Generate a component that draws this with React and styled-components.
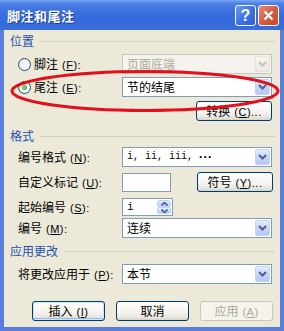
import React from "react";
import styled, { createGlobalStyle } from "styled-components";

const GlobalStyle = createGlobalStyle`
  html, body {
    margin: 0;
    padding: 0;
    background: #ffffff;
  }
  body {
    font-family: "Noto Sans CJK SC", "Noto Sans", sans-serif;
    font-size: 12px;
    color: #000;
  }
`;

const Chevron = ({ disabled }) => (
  <svg width="9" height="6" viewBox="0 0 9 6">
    <path
      d="M1 1 L4.5 4.5 L8 1"
      fill="none"
      stroke={disabled ? "#c4c3bb" : "#4d6185"}
      strokeWidth="2"
    />
  </svg>
);

const Combo = ({ children, disabled }) => (
  <ComboBox $disabled={disabled}>
    <ComboText $disabled={disabled}>{children}</ComboText>
    <DropBtn $disabled={disabled}>
      <Chevron disabled={disabled} />
    </DropBtn>
  </ComboBox>
);

// "(X)" with the access key underlined, plus what follows it (":" or "...")
const Key = ({ k, tail = "" }) => (
  <Mnemonic>
    (<u>{k}</u>){tail}
  </Mnemonic>
);

const App = () => (
  <React.Fragment>
    <GlobalStyle />
    <Window>
      <TitleBar>
        <Title>脚注和尾注</Title>
        <Caption>
          <HelpBtn>?</HelpBtn>
          <CloseBtn>
            <svg width="11" height="11" viewBox="0 0 11 11">
              <path d="M1.5 1.5 L9.5 9.5 M9.5 1.5 L1.5 9.5" stroke="#fff" strokeWidth="2.2" />
            </svg>
          </CloseBtn>
        </Caption>
      </TitleBar>
      <Frame>
        <Body>
          <SectionTitle $mt={4}>位置</SectionTitle>
          <Row $mt={6} $h={20}>
            <RadioLabel>
              <Radio />
              <span>
                脚注<Key k="F" tail=":" />
              </span>
            </RadioLabel>
            <Combo disabled>页面底端</Combo>
          </Row>
          <Row $mt={3} $h={20}>
            <RadioLabel>
              <Radio $checked />
              <span>
                尾注<Key k="E" tail=":" />
              </span>
            </RadioLabel>
            <Combo>节的结尾</Combo>
          </Row>
          <ActionRow $mt={4}>
            <Button $w={76}>
              转换<Key k="C" tail="..." />
            </Button>
          </ActionRow>

          <SectionTitle $mt={8}>格式</SectionTitle>
          <Row $mt={4} $h={20}>
            <Label>
              编号格式<Key k="N" tail=":" />
            </Label>
            <Combo>
              <MonoText>i, ii, iii, </MonoText>
              <Dots>···</Dots>
            </Combo>
          </Row>
          <Row $mt={5} $h={20}>
            <Label>
              自定义标记<Key k="U" tail=":" />
            </Label>
            <SplitCell>
              <TextInput $w={49} />
              <Button $w={76}>
                符号<Key k="Y" tail="..." />
              </Button>
            </SplitCell>
          </Row>
          <Row $mt={6} $h={18}>
            <Label>
              起始编号<Key k="S" tail=":" />
            </Label>
            <Spinner>
              <SpinText>i</SpinText>
              <SpinBtns>
                <SpinHalf>
                  <svg width="7" height="4" viewBox="0 0 7 4">
                    <path d="M0.5 3.5 L3.5 0.5 L6.5 3.5" fill="none" stroke="#4d6185" strokeWidth="1.6" />
                  </svg>
                </SpinHalf>
                <SpinHalf>
                  <svg width="7" height="4" viewBox="0 0 7 4">
                    <path d="M0.5 0.5 L3.5 3.5 L6.5 0.5" fill="none" stroke="#4d6185" strokeWidth="1.6" />
                  </svg>
                </SpinHalf>
              </SpinBtns>
            </Spinner>
          </Row>
          <Row $mt={2} $h={20}>
            <Label>
              编号<Key k="M" tail=":" />
            </Label>
            <Combo>连续</Combo>
          </Row>

          <SectionTitle $mt={6}>应用更改</SectionTitle>
          <Row $mt={6} $h={20}>
            <Label>
              将更改应用于<Key k="P" tail=":" />
            </Label>
            <Combo>本节</Combo>
          </Row>

          <Footer>
            <Button $w={73} $default>
              插入<Key k="I" />
            </Button>
            <Button $w={73}>取消</Button>
            <Button $w={73} disabled>
              应用<Key k="A" />
            </Button>
          </Footer>
        </Body>
      </Frame>
      <Annotation width="284" height="331" viewBox="0 0 284 331">
        <ellipse cx="145" cy="91" rx="133" ry="19.5" fill="none" stroke="#e3101c" strokeWidth="3" />
      </Annotation>
    </Window>
  </React.Fragment>
);

export default App;

const Window = styled.div`
  position: relative;
  width: 284px;
  height: 331px;
  display: flex;
  flex-direction: column;
  overflow: hidden;
`;

const TitleBar = styled.div`
  height: 30px;
  flex: none;
  display: flex;
  align-items: center;
  justify-content: space-between;
  padding: 0 5px 0 7px;
  box-sizing: border-box;
  background: linear-gradient(
    #7aa6f2 0%,
    #4b80e6 12%,
    #3a6fde 40%,
    #3569dc 75%,
    #3a6ed8 100%
  );
`;

const Title = styled.span`
  color: #ffffff;
  font-weight: bold;
  font-size: 13px;
  letter-spacing: 0.5px;
  text-shadow: 1px 1px 0 #1b3f9a;
`;

const Caption = styled.div`
  display: flex;
  gap: 2px;
  margin-top: 1px;
`;

const CapBtn = styled.div`
  width: 21px;
  height: 21px;
  box-sizing: border-box;
  border: 1px solid #ffffff;
  border-radius: 3px;
  display: flex;
  align-items: center;
  justify-content: center;
  color: #ffffff;
`;

const HelpBtn = styled(CapBtn)`
  background: linear-gradient(135deg, #6d9af5 0%, #3b6fe2 55%, #2f5fd5 100%);
  font-family: "Liberation Sans", Arial, sans-serif;
  font-weight: bold;
  font-size: 16px;
`;

const CloseBtn = styled(CapBtn)`
  background: linear-gradient(135deg, #e88a72 0%, #d4583e 55%, #c44a30 100%);
`;

const Frame = styled.div`
  flex: 1;
  display: flex;
  border: 4px solid #5a7ddc;
  border-top: none;
`;

const Body = styled.div`
  flex: 1;
  display: flex;
  flex-direction: column;
  background: #ece9d8;
  padding: 0 5px 0 6px;
`;

const SectionTitle = styled.div`
  display: flex;
  align-items: center;
  height: 14px;
  margin-top: ${(p) => p.$mt}px;
  color: #1e50b4;
  line-height: 14px;
  &::after {
    content: "";
    flex: 1;
    margin-left: 6px;
    border-top: 1px solid #d0d0bf;
  }
`;

const Row = styled.div`
  display: grid;
  grid-template-columns: 112px 1fr;
  align-items: center;
  height: ${(p) => p.$h}px;
  margin-top: ${(p) => p.$mt}px;
  padding-right: 3px;
`;

const Label = styled.div`
  padding-left: 8px;
  white-space: nowrap;
  line-height: 14px;
`;

const RadioLabel = styled(Label)`
  display: flex;
  align-items: center;
  gap: 3px;
`;

const Radio = styled.span`
  width: 13px;
  height: 13px;
  box-sizing: border-box;
  border-radius: 50%;
  border: 1px solid #1c5180;
  background: radial-gradient(circle at 65% 65%, #ffffff 0%, #e6e6df 80%, #d2d0c6 100%);
  display: flex;
  align-items: center;
  justify-content: center;
  &::after {
    content: "";
    width: 5px;
    height: 5px;
    border-radius: 50%;
    background: ${(p) => (p.$checked ? "radial-gradient(circle at 40% 40%, #8ee08e, #21a121)" : "transparent")};
  }
`;

const Mnemonic = styled.span`
  margin-left: 4px;
  font-family: "Liberation Sans", Arial, sans-serif;
  font-size: 11px;
  letter-spacing: 0.5px;
`;

const ComboBox = styled.div`
  height: 20px;
  box-sizing: border-box;
  display: flex;
  align-items: center;
  padding: 1px;
  border: 1px solid ${(p) => (p.$disabled ? "#c9c7ba" : "#7f9db9")};
  background: ${(p) => (p.$disabled ? "#f4f3ee" : "#ffffff")};
`;

const ComboText = styled.div`
  flex: 1;
  display: flex;
  align-items: center;
  padding-left: 3px;
  color: ${(p) => (p.$disabled ? "#aca899" : "#000000")};
  white-space: nowrap;
  line-height: 16px;
`;

const MonoText = styled.span`
  font-family: "Liberation Mono", "DejaVu Sans Mono", monospace;
  font-size: 10px;
  white-space: pre;
`;

const Dots = styled.span`
  font-family: "Liberation Sans", Arial, sans-serif;
  font-weight: bold;
  font-size: 12px;
  letter-spacing: 0.5px;
`;

const DropBtn = styled.div`
  width: 15px;
  height: 16px;
  box-sizing: border-box;
  border-radius: 2px;
  display: flex;
  align-items: center;
  justify-content: center;
  border: 1px solid ${(p) => (p.$disabled ? "#e2e1da" : "#c3d3fd")};
  background: ${(p) =>
    p.$disabled
      ? "linear-gradient(#f6f5f0, #e9e8e0)"
      : "linear-gradient(#e4ecfd 0%, #c6d6fb 50%, #b3c7f3 100%)"};
`;

const ActionRow = styled.div`
  display: flex;
  justify-content: flex-end;
  margin-top: ${(p) => p.$mt}px;
  padding-right: 3px;
`;

const Button = styled.button`
  width: ${(p) => p.$w}px;
  height: 20px;
  box-sizing: border-box;
  padding: 0;
  font-family: "Noto Sans CJK SC", "Noto Sans", sans-serif;
  font-size: 12px;
  line-height: 14px;
  color: #000;
  border-radius: 3px;
  border: 1px solid #003c74;
  background: linear-gradient(#ffffff 0%, #f4f3ee 60%, #e3e1d8 90%, #d6d0c5 100%);
  box-shadow: ${(p) => (p.$default ? "inset 0 0 0 1px #cee7ff, inset 0 -1px 0 1px #98b8ea" : "none")};
  white-space: nowrap;
  &:disabled {
    color: #aca899;
    border-color: #c9c7ba;
    background: #f5f4ea;
  }
`;

const SplitCell = styled.div`
  display: flex;
  justify-content: space-between;
  align-items: center;
  margin-right: -1px;
`;

const TextInput = styled.div`
  width: ${(p) => p.$w}px;
  height: 19px;
  box-sizing: border-box;
  border: 1px solid #7f9db9;
  background: #ffffff;
`;

const Spinner = styled.div`
  width: 51px;
  height: 18px;
  box-sizing: border-box;
  border: 1px solid #7f9db9;
  background: #ffffff;
  display: flex;
  align-items: center;
  padding: 1px;
`;

const SpinText = styled.div`
  flex: 1;
  padding-left: 3px;
  font-family: "Liberation Mono", monospace;
  font-size: 11px;
`;

const SpinBtns = styled.div`
  width: 14px;
  height: 14px;
  display: flex;
  flex-direction: column;
`;

const SpinHalf = styled.div`
  flex: 1;
  display: flex;
  align-items: center;
  justify-content: center;
  border-radius: 2px;
  border: 1px solid #c3d3fd;
  background: linear-gradient(#e4ecfd, #b9cdf6);
  box-sizing: border-box;
`;

const Footer = styled.div`
  display: flex;
  justify-content: flex-end;
  gap: 11px;
  margin-top: 17px;
  padding-right: 2px;
`;

const Annotation = styled.svg`
  position: absolute;
  left: 0;
  top: 0;
  pointer-events: none;
`;
